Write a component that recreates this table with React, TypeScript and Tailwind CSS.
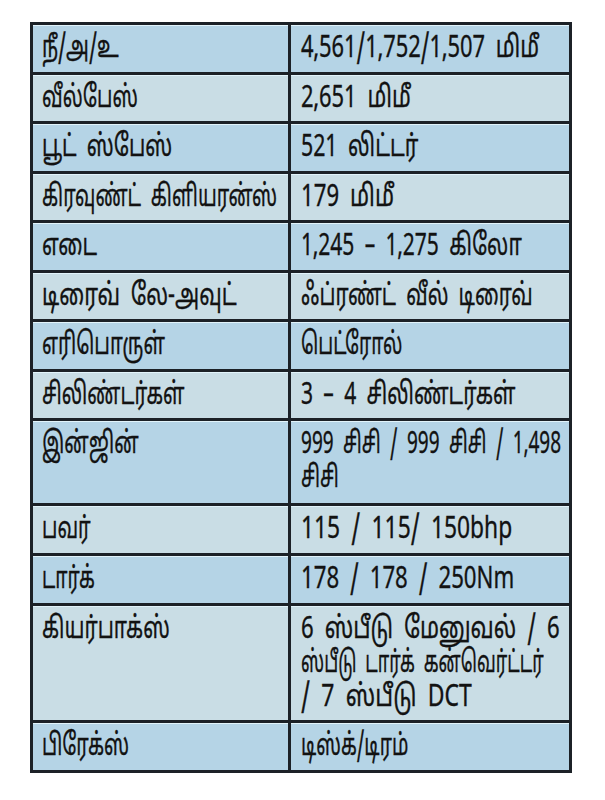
import React from "react";

type Line = { t: string; s: string };
type Row = { k: Line; v: Line[]; h: string; dark: boolean };

const rows: Row[] = [
  { k: { t: "நீ/அ/உ", s: "scale-x-[0.68]" }, v: [{ t: "4,561/1,752/1,507 மிமீ", s: "scale-x-[0.73]" }], h: "h-[49.5px]", dark: true },
  { k: { t: "வீல்பேஸ்", s: "scale-x-[0.66]" }, v: [{ t: "2,651 மிமீ", s: "scale-x-[0.73]" }], h: "h-[49.5px]", dark: false },
  { k: { t: "பூட் ஸ்பேஸ்", s: "scale-x-[0.7]" }, v: [{ t: "521 லிட்டர்", s: "scale-x-[0.71]" }], h: "h-[49.5px]", dark: true },
  { k: { t: "கிரவுண்ட் கிளியரன்ஸ்", s: "scale-x-[0.65]" }, v: [{ t: "179 மிமீ", s: "scale-x-[0.74]" }], h: "h-[49.5px]", dark: false },
  { k: { t: "எடை", s: "scale-x-[0.7]" }, v: [{ t: "1,245 – 1,275 கிலோ", s: "scale-x-[0.7]" }], h: "h-[49.5px]", dark: true },
  { k: { t: "டிரைவ் லே-அவுட்", s: "scale-x-[0.72]" }, v: [{ t: "ஃப்ரண்ட் வீல் டிரைவ்", s: "scale-x-[0.685]" }], h: "h-[49.5px]", dark: false },
  { k: { t: "எரிபொருள்", s: "scale-x-[0.67]" }, v: [{ t: "பெட்ரோல்", s: "scale-x-[0.64]" }], h: "h-[49.5px]", dark: true },
  { k: { t: "சிலிண்டர்கள்", s: "scale-x-[0.67]" }, v: [{ t: "3 – 4 சிலிண்டர்கள்", s: "scale-x-[0.7]" }], h: "h-[49.5px]", dark: false },
  {
    k: { t: "இன்ஜின்", s: "scale-x-[0.66]" },
    v: [
      { t: "999 சிசி / 999 சிசி / 1,498", s: "scale-x-[0.635]" },
      { t: "சிசி", s: "scale-x-[0.64]" },
    ],
    h: "h-[85px]",
    dark: true,
  },
  { k: { t: "பவர்", s: "scale-x-[0.66]" }, v: [{ t: "115 / 115/ 150bhp", s: "scale-x-[0.76]" }], h: "h-[50px]", dark: false },
  { k: { t: "டார்க்", s: "scale-x-[0.64]" }, v: [{ t: "178 / 178 / 250Nm", s: "scale-x-[0.74]" }], h: "h-[50px]", dark: true },
  {
    k: { t: "கியர்பாக்ஸ்", s: "scale-x-[0.69]" },
    v: [
      { t: "6 ஸ்பீடு மேனுவல் / 6", s: "scale-x-[0.74]" },
      { t: "ஸ்பீடு டார்க் கன்வெர்ட்டர்", s: "scale-x-[0.6]" },
      { t: "/ 7 ஸ்பீடு DCT", s: "scale-x-[0.765]" },
    ],
    h: "h-[117px]",
    dark: false,
  },
  { k: { t: "பிரேக்ஸ்", s: "scale-x-[0.65]" }, v: [{ t: "டிஸ்க்/டிரம்", s: "scale-x-[0.64]" }], h: "h-[47px]", dark: true },
];

export default function App() {
  return (
    <div
      className="w-[605px] h-[800px] overflow-hidden bg-white pt-[22px] pl-[30px]"
      style={{ fontFamily: '"Noto Sans Tamil", "Lohit Tamil", "Noto Sans", sans-serif' }}
    >
      <div className="w-[542px] border-[3px] border-[#1c2127] text-[#121212]">
        {rows.map((r, i) => (
          <div
            key={i}
            className={`flex ${r.h} ${i < rows.length - 1 ? "border-b-[3px] border-[#1c2127]" : ""} ${
              r.dark ? "bg-[#b5d4e6]" : "bg-[#c9dde5]"
            } shadow-[inset_0_1px_0_#e2f4fb]`}
          >
            <div className="w-[258px] shrink-0 overflow-hidden border-r-[3px] border-[#1c2127] pl-[9px] pt-[8px] text-[30px] leading-[34px]">
              <span
                className={`inline-block origin-left whitespace-nowrap [word-spacing:7px] [-webkit-text-stroke:0.35px_#121212] ${r.k.s}`}
              >
                {r.k.t}
              </span>
            </div>
            <div className="flex-1 overflow-hidden pl-[10px] pt-[8px] text-[30px] leading-[34px]">
              {r.v.map((l, j) => (
                <div key={j} className="h-[34px]">
                  <span
                    className={`inline-block origin-left whitespace-nowrap [word-spacing:7px] [-webkit-text-stroke:0.35px_#121212] ${l.s}`}
                  >
                    {l.t}
                  </span>
                </div>
              ))}
            </div>
          </div>
        ))}
      </div>
    </div>
  );
}
